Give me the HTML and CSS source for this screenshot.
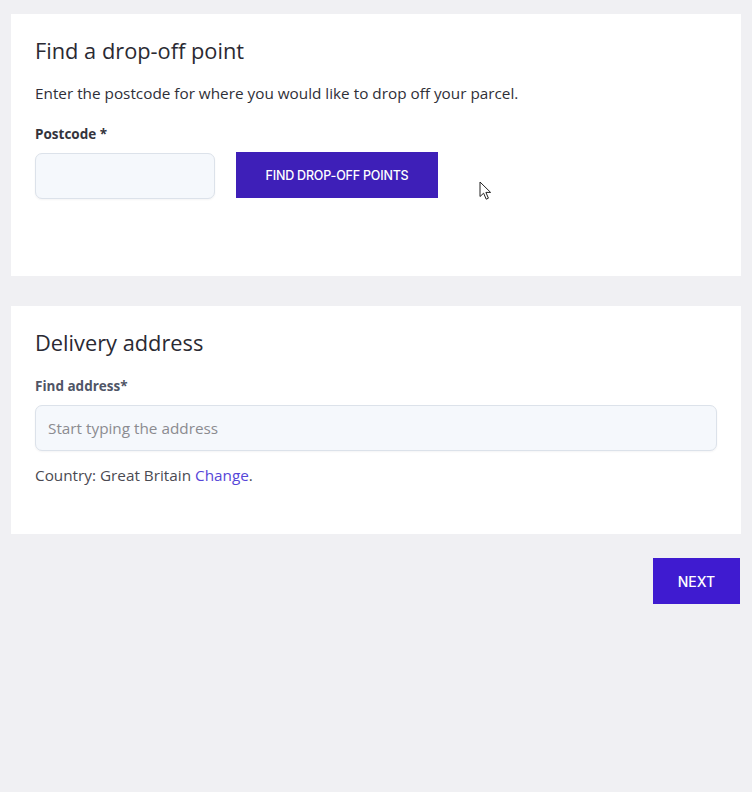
FILE: index.html
```html
<!DOCTYPE html>
<html lang="en">
<head>
<meta charset="utf-8">
<title>Find a drop-off point</title>
<link rel="stylesheet" href="styles.css">
</head>
<body>
<main class="page">
  <section class="card card-dropoff">
    <h2 class="card-title">Find a drop-off point</h2>
    <p class="intro">Enter the postcode for where you would like to drop off your parcel.</p>
    <label class="field-label" for="postcode">Postcode *</label>
    <div class="postcode-row">
      <input class="text-input postcode-input" id="postcode" type="text">
      <button class="btn btn-find" type="button">FIND DROP-OFF POINTS</button>
    </div>
  </section>

  <section class="card card-address">
    <h2 class="card-title">Delivery address</h2>
    <label class="field-label muted" for="address">Find address*</label>
    <input class="text-input address-input" id="address" type="text" placeholder="Start typing the address">
    <p class="country">Country: Great Britain <a class="link" href="#">Change</a>.</p>
  </section>

  <div class="actions">
    <button class="btn btn-next" type="button">NEXT</button>
  </div>
</main>
<svg class="cursor" width="13" height="20" viewBox="0 0 13 20" aria-hidden="true">
  <path d="M1 1 L1 15.5 L4.6 12.2 L7.2 18.2 L9.4 17.2 L6.9 11.4 L11.6 11.4 Z" fill="#fff" stroke="#222" stroke-width="1" stroke-linejoin="round"/>
</svg>
</body>
</html>
```
FILE: styles.css
```css
* { box-sizing: border-box; }
html, body { margin: 0; padding: 0; }
body {
  background: #f0f0f3;
  font-family: "Open Sans", "Lato", Arial, sans-serif;
  color: #2a2a33;
  width: 752px;
  height: 792px;
  position: relative;
  overflow: hidden;
}
.page {
  padding: 14px 11px 0 11px;
  display: flex;
  flex-direction: column;
}
.card {
  background: #ffffff;
  padding: 24px 24px 48px 24px;
  display: flex;
  flex-direction: column;
  align-items: flex-start;
}
.card-dropoff { padding-bottom: 77px; }
.card-address { margin-top: 30px; }
.card-title {
  margin: 0;
  font-size: 21.8px;
  line-height: 26px;
  font-weight: 500;
  color: #2a2a33;
}
.intro {
  margin: 18px 0 0 0;
  font-size: 15.3px;
  line-height: 22px;
  color: #2f2f38;
}
.field-label {
  margin-top: 20px;
  font-size: 13.5px;
  line-height: 20px;
  font-weight: 700;
  color: #34343c;
}
.field-label.muted { color: #4f5566; }
.postcode-row {
  margin-top: 8px;
  display: flex;
  align-items: flex-start;
  gap: 21px;
}
.text-input {
  background: #f5f8fc;
  border: 1px solid #dce2ea;
  border-radius: 7px;
  box-shadow: 0 1px 2px rgba(30, 40, 60, 0.05);
  font-family: inherit;
  font-size: 15.3px;
  color: #2a2a33;
  padding: 0 12px;
  outline: none;
}
.text-input::placeholder { color: #8b8b90; }
.postcode-input {
  width: 180px;
  height: 46px;
  margin-top: 1px;
}
.address-input {
  margin-top: 9px;
  width: 682px;
  height: 46px;
}
.btn {
  border: none;
  color: #ffffff;
  font-family: "Inter", "Roboto", Arial, sans-serif;
  cursor: pointer;
}
.btn-find {
  background: #3e1fb8;
  width: 202px;
  height: 46px;
  font-size: 12.5px;
  font-weight: 500;
  letter-spacing: -0.2px;
}
.country {
  margin: 13px 0 0 0;
  font-size: 15.3px;
  line-height: 22px;
  color: #4a4a52;
}
.link {
  color: #5646d8;
  text-decoration: none;
}
.actions {
  margin-top: 24px;
  display: flex;
  justify-content: flex-end;
  padding-right: 1px;
}
.btn-next {
  background: #3f1bd0;
  width: 87px;
  height: 46px;
  font-size: 14px;
  font-weight: 500;
}
.cursor {
  position: absolute;
  left: 479px;
  top: 181px;
}
```
